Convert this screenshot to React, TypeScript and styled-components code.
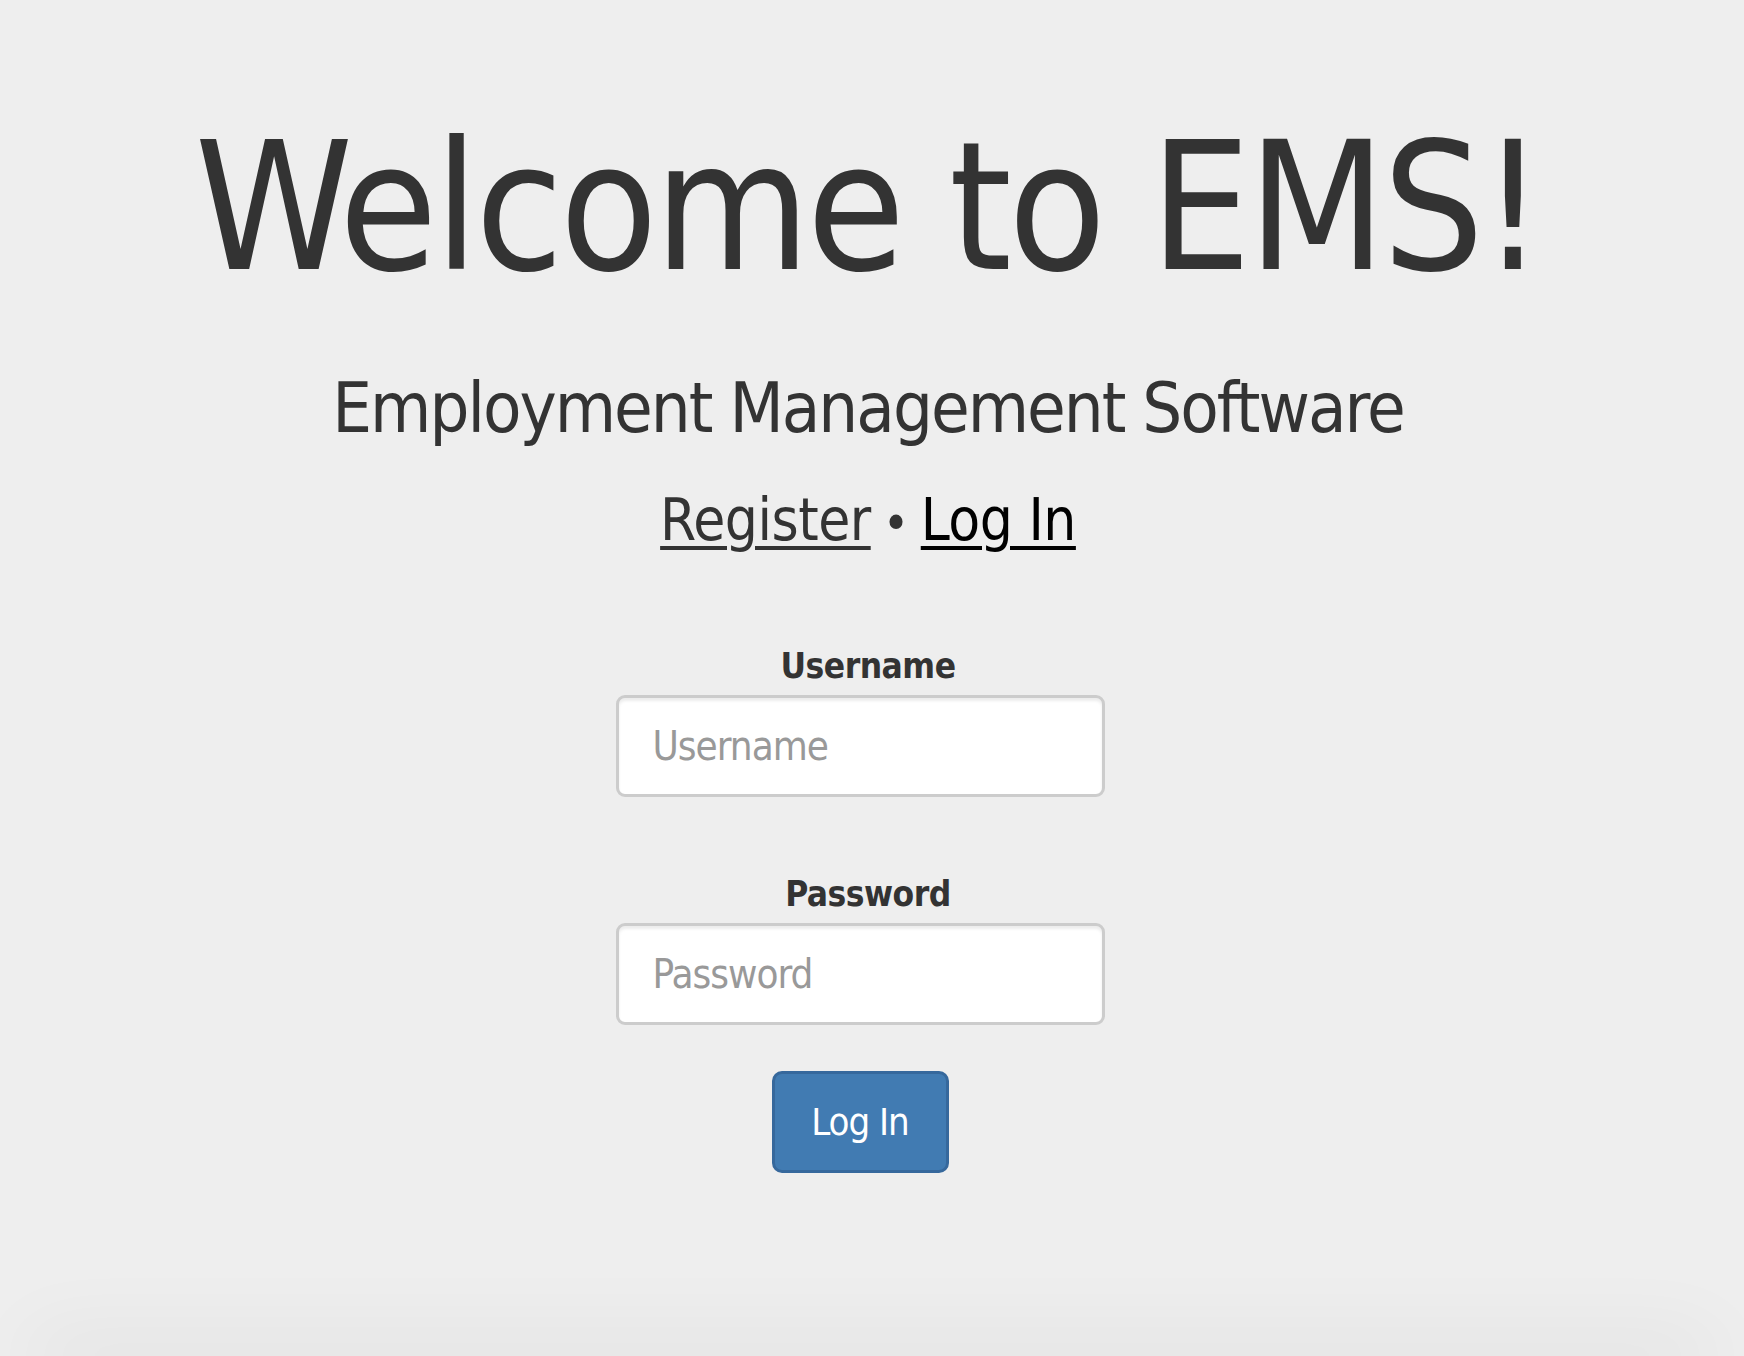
import React from "react";
import styled, { createGlobalStyle } from "styled-components";

const FONT = `"DejaVu Sans Condensed", "Liberation Sans", sans-serif`;

const GlobalStyle = createGlobalStyle`
    html, body {
        margin: 0;
        padding: 0;
        background: #eeeeee;
        overflow: hidden;
    }
    body {
        font-family: ${FONT};
        color: #333333;
    }
`

const Page = styled.div`
    min-height: 100vh;
    display: flex;
    flex-direction: column;
    align-items: center;
    padding: 119px 8px 0 0;
    box-sizing: border-box;
`
const Title = styled.h1`
    margin: 0;
    font-size: 178px;
    line-height: 1;
    font-weight: 400;
    letter-spacing: -3.5px;
    color: #333;
`
const Subtitle = styled.h2`
    margin: 76px 0 0;
    font-size: 70px;
    line-height: 1;
    font-weight: 400;
    letter-spacing: -2px;
    color: #333;
`
const Nav = styled.nav`
    margin-top: 48px;
    font-size: 58px;
    line-height: 1;
    letter-spacing: -0.5px;
    display: flex;
    align-items: baseline;
    gap: 12px;
`
const NavLink = styled.a<{ active?: boolean }>`
    color: ${p => (p.active ? "#000" : "#333")};
    text-decoration: underline;
    text-decoration-thickness: 4px;
    text-underline-offset: 6px;
    cursor: pointer;
`
const Dot = styled.span`
    color: #333;
    font-size: 50px;
`
const Form = styled.form`
    margin-top: 100px;
    display: flex;
    flex-direction: column;
    align-items: center;
`
const Field = styled.div<{ gap: number }>`
    display: flex;
    flex-direction: column;
    align-items: center;
    margin-top: ${p => p.gap}px;
`
const Label = styled.label`
    font-size: 35px;
    line-height: 1;
    font-weight: 700;
    letter-spacing: -0.5px;
    color: #333;
    margin-bottom: 11px;
`
const Input = styled.input`
    width: 489px;
    height: 102px;
    box-sizing: border-box;
    margin-right: 16px;
    border: 3px solid #cccccc;
    border-radius: 9px;
    background: #fff;
    box-shadow: inset 0 3px 3px rgba(0, 0, 0, 0.075);
    padding: 0 34px;
    font-family: ${FONT};
    font-size: 40px;
    letter-spacing: -1px;
    color: #555;
    outline: none;
    &::placeholder {
        color: #999;
    }
`
const Submit = styled.button`
    margin-top: 46px;
    margin-right: 16px;
    width: 177px;
    height: 102px;
    border: 3px solid #36689c;
    border-radius: 10px;
    background: #417bb2;
    color: #fff;
    font-family: ${FONT};
    font-size: 38px;
    letter-spacing: -1px;
    padding: 0;
    cursor: pointer;
`
const Footer = styled.footer`
    margin-top: auto;
    align-self: stretch;
    height: 0;
    margin-left: 40px;
    margin-right: 32px;
    box-shadow: 0 0 80px 10px rgba(0, 0, 0, 0.12);
`

export default function App() {
    return (
        <>
            <GlobalStyle />
            <Page>
                <Title>Welcome to EMS!</Title>
                <Subtitle>Employment Management Software</Subtitle>
                <Nav>
                    <NavLink>Register</NavLink>
                    <Dot>•</Dot>
                    <NavLink active>Log In</NavLink>
                </Nav>
                <Form onSubmit={e => e.preventDefault()}>
                    <Field gap={0}>
                        <Label htmlFor="username">Username</Label>
                        <Input id="username" placeholder="Username" />
                    </Field>
                    <Field gap={80}>
                        <Label htmlFor="password">Password</Label>
                        <Input id="password" type="password" placeholder="Password" />
                    </Field>
                    <Submit type="submit">Log In</Submit>
                </Form>
                <Footer />
            </Page>
        </>
    )
}
